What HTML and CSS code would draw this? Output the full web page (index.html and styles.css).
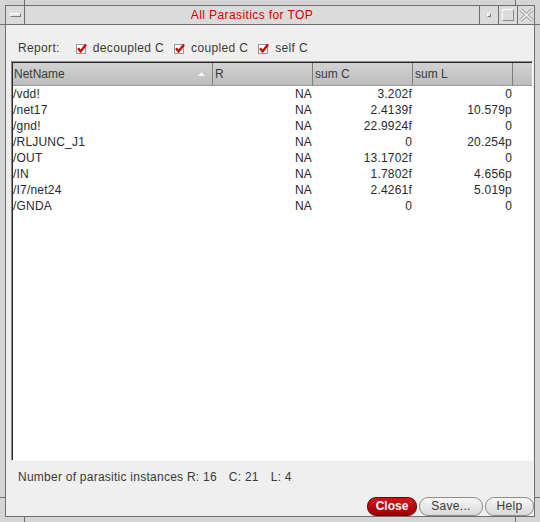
FILE: index.html
```html
<!DOCTYPE html>
<html>
<head>
<meta charset="utf-8">
<title>All Parasitics for TOP</title>
<link rel="stylesheet" href="styles.css">
</head>
<body>
<div class="window">
  <div class="titlebar">
    <div class="tb-btn menu"><span class="menu-bar"></span></div>
    <div class="title">All Parasitics for TOP</div>
    <div class="tb-btn min"><span class="min-dot"></span></div>
    <div class="tb-btn max"><span class="max-box"></span></div>
    <div class="tb-btn close">
      <svg width="15" height="14" viewBox="0 0 15 14">
        <path d="M1.5 1.5 L13.5 12.5 M13.5 1.5 L1.5 12.5" stroke="#a4a4a4" stroke-width="3.6" fill="none"/>
        <path d="M1.5 1.5 L13.5 12.5 M13.5 1.5 L1.5 12.5" stroke="#f0f0f0" stroke-width="1.6" fill="none"/>
      </svg>
    </div>
  </div>
  <div class="content">
    <div class="report">
      <span class="report-label">Report:</span>
      <span class="opt"><svg class="chk" viewBox="0 0 11 11"><rect x="0.5" y="1.5" width="9" height="9" fill="#fff" stroke="#9a9a9a"/><path d="M2 5.2 L4.6 8.4 L10 1.6" stroke="#d00000" stroke-width="2.4" fill="none"/></svg>decoupled C</span>
      <span class="opt"><svg class="chk" viewBox="0 0 11 11"><rect x="0.5" y="1.5" width="9" height="9" fill="#fff" stroke="#9a9a9a"/><path d="M2 5.2 L4.6 8.4 L10 1.6" stroke="#d00000" stroke-width="2.4" fill="none"/></svg>coupled C</span>
      <span class="opt"><svg class="chk" viewBox="0 0 11 11"><rect x="0.5" y="1.5" width="9" height="9" fill="#fff" stroke="#9a9a9a"/><path d="M2 5.2 L4.6 8.4 L10 1.6" stroke="#d00000" stroke-width="2.4" fill="none"/></svg>self C</span>
    </div>
    <div class="table">
      <div class="table-inner">
        <div class="thead">
          <div class="th c-name"><span>NetName</span><svg class="sort" width="7" height="4" viewBox="0 0 7 4"><path d="M0 4 L3.5 0 L7 4 Z" fill="#f4f4f4"/></svg></div>
          <div class="th c-r">R</div>
          <div class="th c-c">sum C</div>
          <div class="th c-l">sum L</div>
          <div class="th c-fill"></div>
        </div>
        <div class="tbody">
          <div class="tr"><span class="td c-name">/vdd!</span><span class="td c-r num">NA</span><span class="td c-c num">3.202f</span><span class="td c-l num">0</span></div>
          <div class="tr"><span class="td c-name">/net17</span><span class="td c-r num">NA</span><span class="td c-c num">2.4139f</span><span class="td c-l num">10.579p</span></div>
          <div class="tr"><span class="td c-name">/gnd!</span><span class="td c-r num">NA</span><span class="td c-c num">22.9924f</span><span class="td c-l num">0</span></div>
          <div class="tr"><span class="td c-name">/RLJUNC_J1</span><span class="td c-r num">NA</span><span class="td c-c num">0</span><span class="td c-l num">20.254p</span></div>
          <div class="tr"><span class="td c-name">/OUT</span><span class="td c-r num">NA</span><span class="td c-c num">13.1702f</span><span class="td c-l num">0</span></div>
          <div class="tr"><span class="td c-name">/IN</span><span class="td c-r num">NA</span><span class="td c-c num">1.7802f</span><span class="td c-l num">4.656p</span></div>
          <div class="tr"><span class="td c-name">/I7/net24</span><span class="td c-r num">NA</span><span class="td c-c num">2.4261f</span><span class="td c-l num">5.019p</span></div>
          <div class="tr"><span class="td c-name">/GNDA</span><span class="td c-r num">NA</span><span class="td c-c num">0</span><span class="td c-l num">0</span></div>
        </div>
      </div>
    </div>
    <div class="status">Number of parasitic instances R: 16<span class="gap">C: 21</span><span class="gap">L: 4</span></div>
    <div class="buttons">
      <button class="btn primary b-close">Close</button>
      <button class="btn b-save">Save...</button>
      <button class="btn b-help">Help</button>
    </div>
  </div>
</div>
<div class="tick v t-tl"></div>
<div class="tick v t-tr"></div>
<div class="tick v t-bl"></div>
<div class="tick v t-br"></div>
<div class="tick h t-lt"></div>
<div class="tick h t-rt"></div>
<div class="tick h t-lb"></div>
<div class="tick h t-rb"></div>
</body>
</html>
```

FILE: styles.css
```css
html, body {
  margin: 0;
  padding: 0;
}
body {
  width: 540px;
  height: 522px;
  background: #d5d5d5;
  position: relative;
  overflow: hidden;
  font-family: "Liberation Sans", Arial, sans-serif;
  font-size: 12px;
  color: #333;
}
.window {
  margin: 5px 0 0 5px;
  width: 528px;
  height: 510px;
  border: 1px solid #6f6f6f;
  display: flex;
  flex-direction: column;
}
.titlebar {
  height: 18px;
  flex: none;
  border-bottom: 1px solid #6f6f6f;
  background: #dbdbdb;
  display: flex;
}
.tb-btn {
  display: flex;
  align-items: center;
  justify-content: center;
}
.menu {
  width: 18px;
  border-right: 1px solid #6f6f6f;
}
.menu-bar {
  width: 9px;
  height: 2px;
  border: 1px solid;
  border-color: #ffffff #7a7a7a #7a7a7a #ffffff;
  background: #e4e4e4;
}
.title {
  flex: 1;
  text-align: center;
  color: #d40000;
  line-height: 18px;
  letter-spacing: 0.4px;
}
.min {
  width: 18px;
  border-left: 1px solid #6f6f6f;
}
.min-dot {
  width: 2px;
  height: 2px;
  border: 1px solid;
  border-color: #ffffff #7a7a7a #7a7a7a #ffffff;
  background: #e4e4e4;
}
.max {
  width: 18px;
  border-left: 1px solid #6f6f6f;
}
.max-box {
  width: 10px;
  height: 10px;
  border: 1px solid;
  border-color: #ffffff #8a8a8a #8a8a8a #ffffff;
  background: #dbdbdb;
}
.close {
  width: 16px;
  border-left: 1px solid #6f6f6f;
}
.content {
  flex: 1;
  background: #efefef;
  display: flex;
  flex-direction: column;
}
.report {
  display: flex;
  align-items: center;
  height: 22px;
  margin-top: 12px;
  padding-left: 12px;
  color: #3a3a3a;
  letter-spacing: 0.35px;
}
.report-label {
  margin-right: 16px;
}
.opt {
  display: flex;
  align-items: center;
  margin-right: 10px;
}
.chk {
  width: 11px;
  height: 11px;
  margin-right: 6px;
}
.table {
  margin: 2px 1px 0 5px;
  height: 400px;
  box-sizing: border-box;
  border: 1px solid;
  border-color: #8c8c8c #fafafa #fafafa #8c8c8c;
  display: flex;
  flex-direction: column;
}
.table-inner {
  flex: 1;
  border-top: 1px solid #2a2a2a;
  border-left: 1px solid #2a2a2a;
  background: #ffffff;
  display: flex;
  flex-direction: column;
}
.thead {
  display: flex;
  height: 22px;
  border-bottom: 1px solid #9a9a9a;
  background: linear-gradient(#d2d2d2, #bdbdbd);
  color: #3a3a3a;
}
.th {
  display: flex;
  align-items: center;
  padding-left: 2px;
  box-sizing: border-box;
  border-right: 1px solid #7c7c7c;
}
.th.c-name {
  width: 200px;
  padding-left: 1px;
  padding-right: 7px;
  justify-content: space-between;
}
.th.c-r, .th.c-c, .th.c-l {
  width: 100px;
}
.th.c-fill {
  flex: 1;
  border-right: none;
}
.tr {
  display: flex;
  height: 16px;
  line-height: 16px;
  color: #2a2a2a;
  letter-spacing: 0.2px;
}
.td {
  box-sizing: border-box;
  white-space: nowrap;
}
.td.c-name {
  width: 200px;
}
.td.c-r, .td.c-c, .td.c-l {
  width: 100px;
}
.num {
  text-align: right;
  padding-right: 1px;
}
.status {
  margin-top: 8px;
  line-height: 16px;
  padding-left: 12px;
  color: #3a3a3a;
  letter-spacing: 0.25px;
}
.gap {
  margin-left: 12px;
}
.buttons {
  display: flex;
  justify-content: flex-end;
  gap: 2px;
  margin-top: 12px;
}
.btn {
  height: 19px;
  box-sizing: border-box;
  padding: 0;
  border: 1px solid #8c8c8c;
  border-radius: 9px;
  background: linear-gradient(#f7f7f7, #d9d9d9);
  font-family: "Liberation Sans", Arial, sans-serif;
  font-size: 12px;
  color: #3a3a3a;
  line-height: 17px;
  letter-spacing: 0.3px;
}
.btn.primary {
  background: linear-gradient(#d0141a, #a00000);
  border-color: #6a0000;
  color: #ffffff;
  font-weight: bold;
  letter-spacing: 0;
}
.b-close { width: 50px; }
.b-save { width: 64px; }
.b-help { width: 49px; }
.tick {
  position: absolute;
  background: #6f6f6f;
}
.tick.v { width: 1px; height: 5px; }
.tick.h { width: 5px; height: 1px; }
.t-tl { left: 24px; top: 0; }
.t-tr { left: 515px; top: 0; }
.t-bl { left: 24px; top: 517px; }
.t-br { left: 515px; top: 517px; }
.t-lt { left: 0; top: 24px; }
.t-rt { left: 535px; top: 24px; }
.t-lb { left: 0; top: 497px; }
.t-rb { left: 535px; top: 497px; }
```
